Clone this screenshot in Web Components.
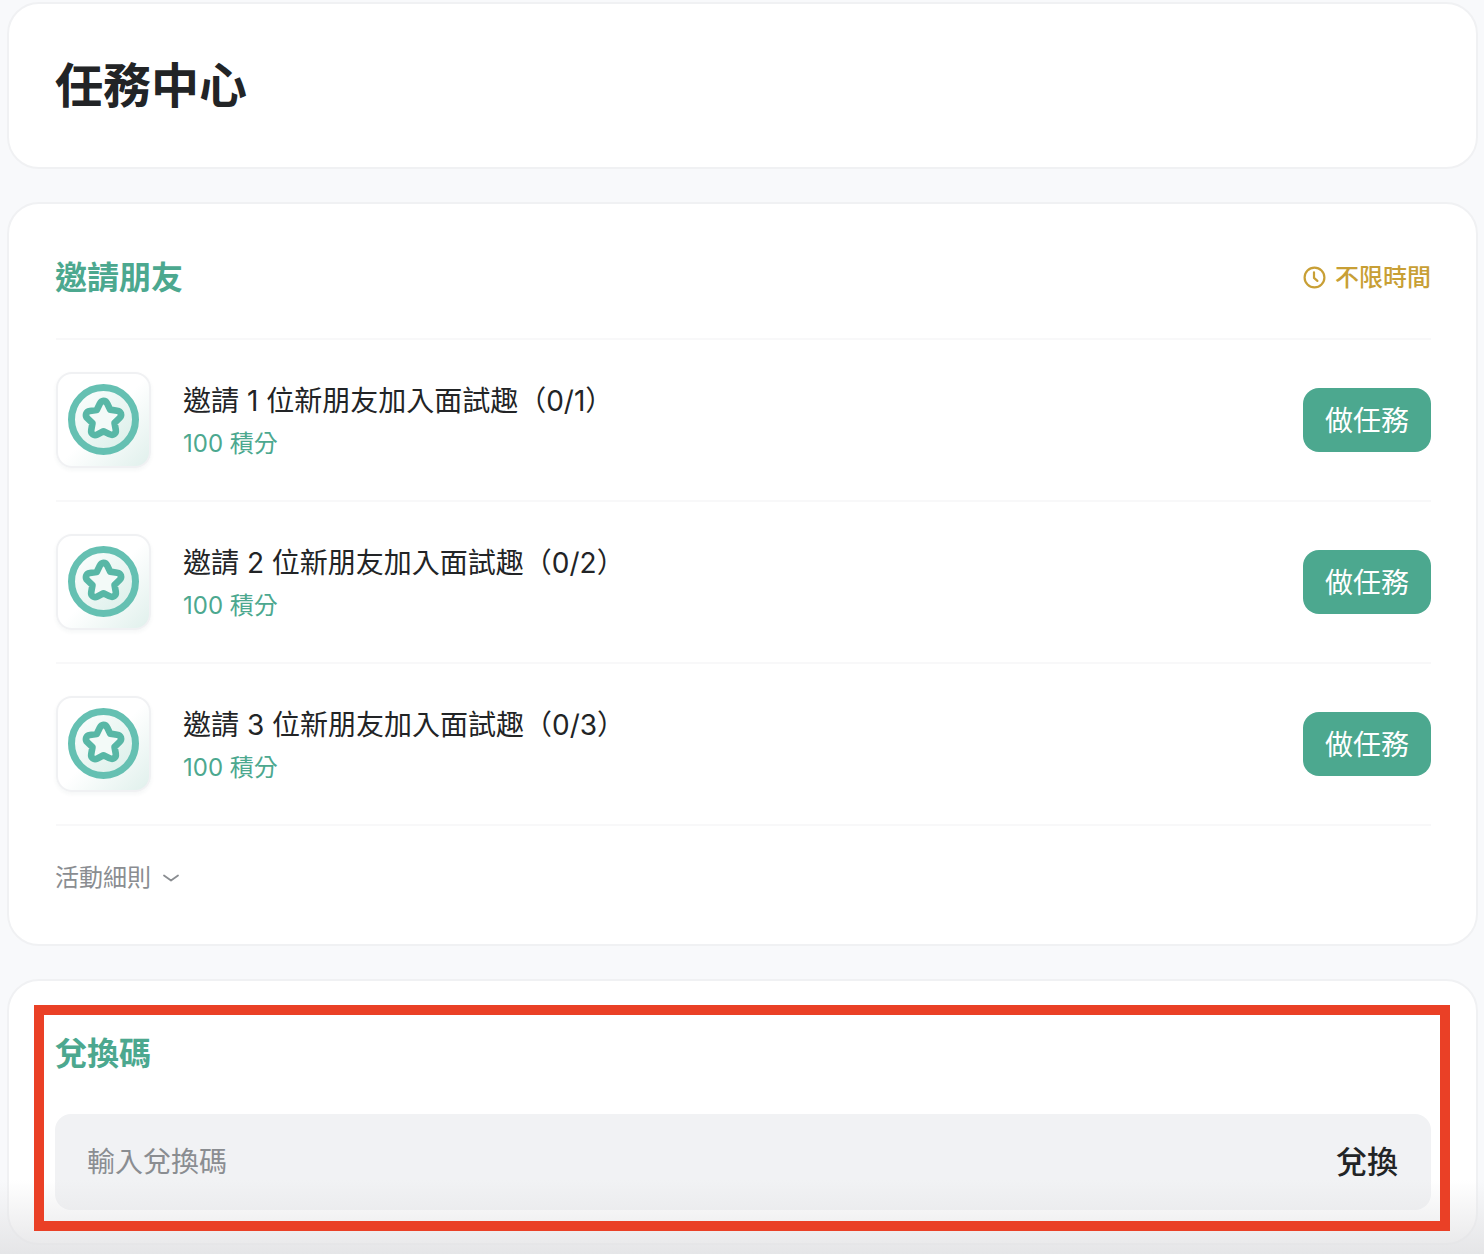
<!DOCTYPE html>
<html lang="zh-Hant">
<head>
<meta charset="utf-8">
<title>任務中心</title>
<style>
html,body{margin:0;padding:0;height:1254px;overflow:hidden;background:#f8f9fb;}
body{font-family:"Inter","Noto Sans CJK TC",sans-serif;color:#222426;position:relative;}
</style>
</head>
<body>
<task-page>
  <panel-card>
    <page-title>任務中心</page-title>
  </panel-card>
  <panel-card>
    <section-head>
      <span slot="title">邀請朋友</span>
      <time-tag slot="aside">不限時間</time-tag>
    </section-head>
    <task-row label="邀請 1 位新朋友加入面試趣（0/1）"></task-row>
    <task-row label="邀請 2 位新朋友加入面試趣（0/2）"></task-row>
    <task-row label="邀請 3 位新朋友加入面試趣（0/3）"></task-row>
    <rules-toggle>活動細則</rules-toggle>
  </panel-card>
  <panel-card>
    <redeem-box></redeem-box>
  </panel-card>
</task-page>
<bottom-fade></bottom-fade>
<mark-frame></mark-frame>
<script>
function def(name, html){
  customElements.define(name, class extends HTMLElement{
    connectedCallback(){
      if(this.shadowRoot) return;
      this.attachShadow({mode:'open'}).innerHTML=typeof html==='function'?html(this):html;
    }
  });
}
def('task-page',`<style>:host{display:flex;flex-direction:column;gap:33px;padding:2px 6px 0 7px;box-sizing:border-box;width:1484px}</style><slot></slot>`);
def('panel-card',`<style>:host{display:block;box-sizing:border-box;background:#fff;border:2px solid #f0f1f3;border-radius:32px;padding:0 45px 0 47px}</style><slot></slot>`);
def('page-title',`<style>:host{display:flex;align-items:center;height:163px;margin-left:-1px;font-size:48px;font-weight:700;color:#222426;line-height:1}</style><slot></slot>`);
def('section-head',`<style>
:host{display:flex;align-items:center;justify-content:space-between;height:136px;padding:13px 0 0 0;border-bottom:2px solid #f8f8f9;box-sizing:border-box}
.t{font-size:32px;font-weight:700;color:#4ca88f;line-height:1;margin-left:-1px}
</style><span class="t"><slot name="title"></slot></span><slot name="aside"></slot>`);
def('time-tag',`<style>
:host{display:inline-flex;align-items:center;gap:9px;font-size:24px;font-weight:500;line-height:1;color:#c89f35}
svg{width:23px;height:23px;display:block}
</style><svg viewBox="0 0 23 23" fill="none" stroke="#c89f35" stroke-width="2.2" stroke-linecap="round" stroke-linejoin="round"><circle cx="11.5" cy="11.5" r="9.9"/><path d="M11 6.3v5.6l3.4 3"/></svg><slot></slot>`);
def('star-badge',`<style>
:host{display:block;width:95px;height:96px;box-sizing:border-box;border:2px solid #f0f1f3;border-radius:16px;background:linear-gradient(135deg,#fff 50%,#e0f0ec 100%);box-shadow:0 2px 4px rgba(40,80,70,.05)}
svg{display:block;width:92px;height:92px}
</style><svg viewBox="0 0 92 92" fill="none">
<defs><linearGradient id="g" x1="0" y1="0" x2="1" y2="1"><stop offset="0" stop-color="#fff"/><stop offset="1" stop-color="#d8eee8"/></linearGradient></defs>
<circle cx="45.500" cy="45.500" r="32" fill="url(#g)" stroke="#65c0b2" stroke-width="7"/>
<g transform="translate(45.500 44) scale(.95) translate(-46 -44.500)">
<path d="M46 26.500c1.700 0 3 1 3.900 2.800l3.200 6.400 7.200 1.100c2 .3 3.400 1.400 4 3 .5 1.700 0 3.400-1.500 4.800l-5.200 5 1.300 7.200c.3 2-.2 3.600-1.600 4.600-1.400 1-3.100 1-4.900.1L46 58.500l-6.400 3.300c-1.800.9-3.500.9-4.900-.1-1.400-1-1.900-2.600-1.600-4.600l1.300-7.200-5.200-5c-1.500-1.400-2-3.100-1.500-4.800.6-1.600 2-2.700 4-3l7.200-1.100 3.200-6.400c.9-1.800 2.200-2.800 3.900-2.800z" fill="#f3faf8" stroke="#58b7a6" stroke-width="7" stroke-linejoin="round"/>
</g>
</svg>`);
def('action-button',`<style>
:host{display:flex;align-items:center;justify-content:center;width:128px;height:64px;padding-top:1px;box-sizing:border-box;border-radius:16px;background:#4ca88f;color:#fff;font-size:28px;line-height:1;flex:none}
</style><slot></slot>`);
def('task-row',el=>`<style>
:host{display:flex;align-items:center;height:162px;box-sizing:border-box;border-bottom:2px solid #f8f8f9;gap:32px}
.m{flex:1;display:flex;flex-direction:column;gap:12px;padding-top:3px}
.t{font-size:28px;line-height:32px;color:#222426}
.s{font-size:24px;line-height:30px;color:#4ca88f}
</style><star-badge></star-badge><div class="m"><div class="t">${el.getAttribute('label')||''}</div><div class="s">100 積分</div></div><action-button>做任務</action-button>`);
def('rules-toggle',`<style>
:host{display:flex;align-items:center;gap:11px;height:118px;margin-left:-1px;padding:0 0 14px 0;box-sizing:border-box;font-size:24px;line-height:1;color:#8a8d91}
svg{width:18px;height:10px;display:block}
</style><slot></slot><svg viewBox="0 0 18 10" fill="none" stroke="#8a8d91" stroke-width="1.8" stroke-linecap="round" stroke-linejoin="round"><path d="M2 2.500 9 7.500 16 2.500"/></svg>`);
def('redeem-box',`<style>
:host{display:block;padding-top:50px;height:262px;box-sizing:border-box;margin-left:-1px}
.t{font-size:32px;font-weight:700;color:#4ca88f;line-height:46px;height:46px}
.f{margin-top:37px;height:96px;background:#f1f2f4;border-radius:16px;display:flex;align-items:center;justify-content:space-between;padding:0 33px 0 32px;box-sizing:border-box}
.p{font-size:28px;color:#8a8d91;line-height:1}
.b{font-size:31px;font-weight:500;color:#222426;line-height:1;margin-top:-1px}
</style><div class="t">兌換碼</div><div class="f"><span class="p">輸入兌換碼</span><span class="b">兌換</span></div>`);
def('bottom-fade',`<style>
:host{position:absolute;left:0;right:0;bottom:0;height:74px;pointer-events:none;background:linear-gradient(rgba(226,226,228,0),rgba(226,226,228,.85))}
</style>`);
def('mark-frame',`<style>
:host{position:absolute;left:34px;top:1005px;width:1416px;height:226px;box-sizing:border-box;border:10px solid #ea4026;pointer-events:none}
</style>`);
</script>
</body>
</html>
